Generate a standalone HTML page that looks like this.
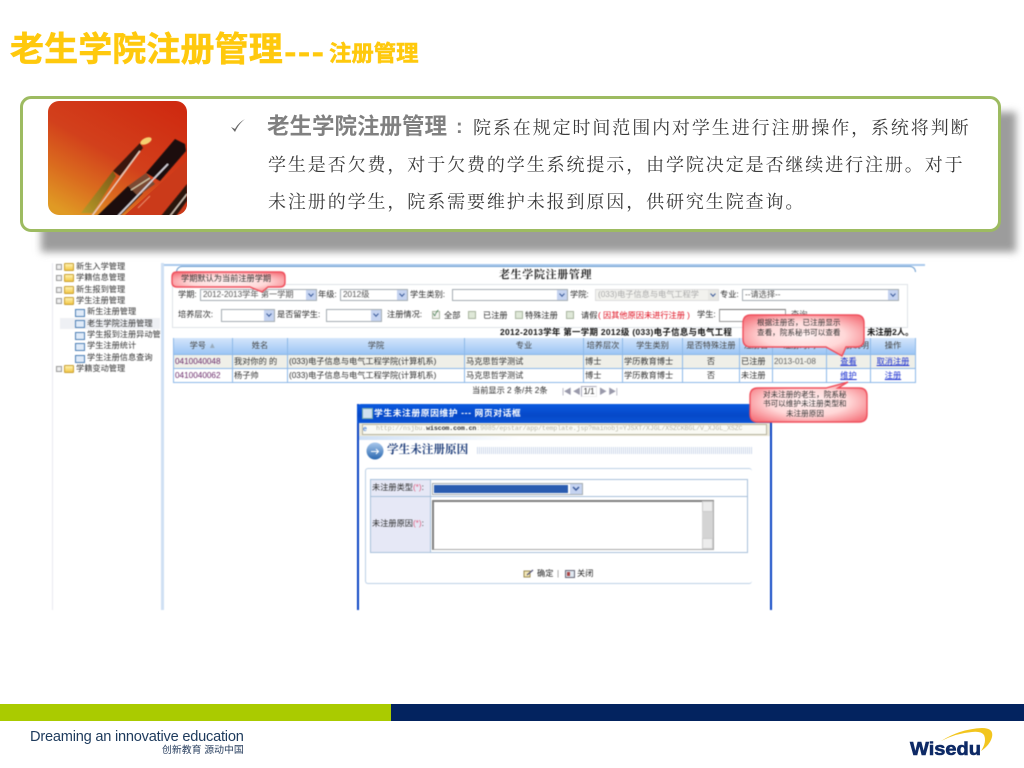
<!DOCTYPE html>
<html lang="zh"><head><meta charset="utf-8"><title>老生学院注册管理</title>
<style>
html,body{margin:0;padding:0;background:#fff}
#p{position:relative;width:1024px;height:768px;overflow:hidden;background:#fff;font-family:"Liberation Sans","Noto Sans CJK SC",sans-serif}
#p div,#p span.t{position:absolute}
.t{position:absolute;white-space:nowrap;line-height:1}
.ttl{font-weight:700;color:#ffc90d;-webkit-text-stroke:.5px #ffc90d}
.bd{font-size:18px;letter-spacing:1.9px;color:#3a3a3a;font-family:'Noto Serif CJK SC',serif}
#shot{position:absolute;left:0;top:0;width:1024px;height:768px;filter:blur(.45px);font-size:8.2px;color:#2a2a2a}
.sel{position:absolute;box-sizing:border-box;background:#fff;border:1px solid #a5acb2;color:#555;font-size:8.2px;line-height:10px;padding-left:2px;white-space:nowrap;overflow:hidden}
.ar{position:absolute;right:0;top:0;bottom:0;width:10px;background:#c5d3f0}
.ar:after{content:"";position:absolute;left:2.5px;top:2px;width:3px;height:3px;border:solid #3a5a9a;border-width:0 1.5px 1.5px 0;transform:rotate(45deg)}
.cb{position:absolute;width:8px;height:8px;box-sizing:border-box;background:#dfe8d8;border:1px solid #a9b5a0}
.th,.td{position:absolute;box-sizing:border-box;border:1px solid #8db8e8;border-width:0 1px 1px 0;font-size:8.2px;white-space:nowrap;overflow:hidden}
.th{top:338px;height:17px;line-height:16px;text-align:center;background:linear-gradient(#d4e6fb,#9cc6f5);color:#444}
.td{height:14px;line-height:13px;padding-left:1px;color:#333}
.r1{top:355px;background:#efefe8}.r2{top:369px;background:#fff}
.lk{color:#1a2fd0;text-decoration:underline;text-align:center;padding:0}
.c{text-align:center;padding:0}
.tr{font-size:8.2px;color:#333}
.fold{position:absolute;left:64px;width:10px;height:8px;background:linear-gradient(#fff2b0,#f3c94a);border:1px solid #c9a030;box-sizing:border-box;border-radius:1px}
.pl{position:absolute;left:56px;width:6px;height:6px;border:1px solid #999;box-sizing:border-box;background:#eee}
.pg{position:absolute;left:75px;width:10px;height:8px;background:#dfeaf8;border:1px solid #4d7fb5;box-sizing:border-box}
</style></head><body><div id="p">

<span class="t ttl" style="left:10px;top:33px;font-size:34px;letter-spacing:.1px">老生学院注册管理</span>
<span class="t ttl" style="left:284px;top:33px;font-size:34px;letter-spacing:1.2px;font-family:'Noto Sans CJK SC',sans-serif">---</span>
<span class="t ttl" style="left:329px;top:43px;font-size:22.4px">注册管理</span>

<div style="left:41px;top:112px;width:975px;height:140px;background:#9c9c9c;filter:blur(4px)"></div>
<div style="left:20px;top:96px;width:981px;height:136px;box-sizing:border-box;background:#fff;border:3px solid #9dbb61;border-radius:11px"></div>

<svg style="position:absolute;left:48px;top:101px" width="139" height="114" viewBox="48 101 139 114">
<defs>
<linearGradient id="bg" x1="0.85" y1="0" x2="0.15" y2="1"><stop offset="0" stop-color="#cf2a10"/><stop offset=".5" stop-color="#d2401c"/><stop offset=".75" stop-color="#da6a1e"/><stop offset="1" stop-color="#e09a24"/></linearGradient>
<linearGradient id="gd" x1="0" y1="1" x2="1" y2="0"><stop offset="0" stop-color="#b89a28"/><stop offset="1" stop-color="#7a5a18"/></linearGradient>
<clipPath id="cp"><rect x="48" y="101" width="139" height="114" rx="11"/></clipPath>
<filter id="sf"><feGaussianBlur stdDeviation=".55"/></filter>
</defs>
<g clip-path="url(#cp)">
<rect x="48" y="101" width="139" height="114" fill="url(#bg)"/>
<path d="M125 215L187 160V215Z" fill="#cb3a1a"/>
<g filter="url(#sf)">
<path d="M81 213L93 213L116 176L113 171Z" fill="url(#gd)"/>
<path d="M113 171L140 143L143 148L120 176Z" fill="#3a1510"/>
<ellipse cx="146" cy="141" rx="6" ry="3" transform="rotate(-25 146 141)" fill="#f5d070"/>
<path d="M92 216L140 151" stroke="#e8c8b8" stroke-width="1.600" fill="none"/>
<path d="M97 216L128 186L143 193L120 216Z" fill="#1a0808"/>
<path d="M128 186L146 173L155 184L138 196Z" fill="#7a4a32"/>
<path d="M131 190L150 178" stroke="#d8c8a8" stroke-width="1.200"/>
<path d="M146 173L175 139L185 144L186 151L160 181Z" fill="#1e0a0c"/>
<path d="M118 216L168 164" stroke="#dcd8e0" stroke-width="1.600" fill="none"/>
<path d="M161 216L187 184V201L176 216Z" fill="#2a1210"/>
<path d="M170 216L187 194" stroke="#d8c8b8" stroke-width="1.300" fill="none"/>
<path d="M138 208L150 196" stroke="#e89070" stroke-width="1" fill="none"/>
</g>
</g></svg>

<svg style="position:absolute;left:230px;top:118px" width="16" height="16" viewBox="0 0 16 16"><path d="M1 9L5 14Q8.500 6 15 1Q8 5 5 11Z" fill="#666"/></svg>
<span class="t" style="left:267px;top:116px;font-size:22.5px;font-weight:700;color:#808080">老生学院注册管理</span>
<span class="t" style="left:456px;top:117px;font-size:20px;font-weight:700;color:#808080">:</span>
<span class="t bd" style="left:473px;top:118px">院系在规定时间范围内对学生进行注册操作，系统将判断</span>
<span class="t bd" style="left:268px;top:155px">学生是否欠费，对于欠费的学生系统提示，由学院决定是否继续进行注册。对于</span>
<span class="t bd" style="left:268px;top:192px">未注册的学生，院系需要维护未报到原因，供研究生院查询。</span>

<div id="shot">
<!-- sidebar -->
<div style="left:52px;top:263px;width:108px;height:347px;background:#fff;border-left:1px solid #e8e8f0"></div>
<div style="left:161px;top:263px;width:3px;height:347px;background:#cfe0f3"></div>
<div style="left:60px;top:318px;width:100px;height:11px;background:#eef0f4"></div>
<div class="pl" style="top:264px"></div><div class="fold" style="top:263px"></div><span class="t tr" style="left:76px;top:263px">新生入学管理</span>
<div class="pl" style="top:275px"></div><div class="fold" style="top:274px"></div><span class="t tr" style="left:76px;top:274px">学籍信息管理</span>
<div class="pl" style="top:287px"></div><div class="fold" style="top:286px"></div><span class="t tr" style="left:76px;top:286px">新生报到管理</span>
<div class="pl" style="top:298px"></div><div class="fold" style="top:297px"></div><span class="t tr" style="left:76px;top:297px">学生注册管理</span>
<div class="pg" style="top:309px"></div><span class="t tr" style="left:87px;top:308px">新生注册管理</span>
<div class="pg" style="top:320px"></div><span class="t tr" style="left:87px;top:320px">老生学院注册管理</span>
<div class="pg" style="top:332px"></div><span class="t tr" style="left:87px;top:331px">学生报到注册异动管</span>
<div class="pg" style="top:343px"></div><span class="t tr" style="left:87px;top:342px">学生注册统计</span>
<div class="pg" style="top:355px"></div><span class="t tr" style="left:87px;top:354px">学生注册信息查询</span>
<div class="pl" style="top:366px"></div><div class="fold" style="top:365px"></div><span class="t tr" style="left:76px;top:365px">学籍变动管理</span>

<!-- main panel frame -->
<div style="left:164px;top:264px;width:761px;height:2px;background:#a9c9ec"></div>
<div style="left:176px;top:266px;width:740px;height:6px;box-sizing:border-box;border:1.500px solid #6f9fd0;border-bottom:0;border-radius:6px 6px 0 0;background:#fff"></div>
<div style="left:172px;top:284px;width:736px;height:44px;box-sizing:border-box;border:1px solid #dfe3e8"></div>
<span class="t" style="left:499px;top:269px;font-size:11px;font-weight:700;color:#222;letter-spacing:.65px;font-family:'Noto Serif CJK SC',serif">老生学院注册管理</span>

<span class="t" style="left:178px;top:291px">学期:</span>
<div class="sel" style="left:200px;top:289px;width:117px;height:12px">2012-2013学年 第一学期<i class="ar"></i></div>
<span class="t" style="left:318px;top:291px">年级:</span>
<div class="sel" style="left:340px;top:289px;width:68px;height:12px">2012级<i class="ar"></i></div>
<span class="t" style="left:410px;top:291px">学生类别:</span>
<div class="sel" style="left:452px;top:289px;width:116px;height:12px"><i class="ar"></i></div>
<span class="t" style="left:570px;top:291px">学院:</span>
<div class="sel" style="left:595px;top:289px;width:124px;height:12px;background:#f2f2ee;color:#aaa;border-color:#ddd">(033)电子信息与电气工程学<i class="ar" style="background:#e8e8e4"></i></div>
<span class="t" style="left:720px;top:291px">专业:</span>
<div class="sel" style="left:742px;top:289px;width:157px;height:12px">--请选择--<i class="ar"></i></div>

<span class="t" style="left:178px;top:311px">培养层次:</span>
<div class="sel" style="left:221px;top:309px;width:54px;height:13px"><i class="ar"></i></div>
<span class="t" style="left:277px;top:311px">是否留学生:</span>
<div class="sel" style="left:326px;top:309px;width:56px;height:13px"><i class="ar"></i></div>
<span class="t" style="left:387px;top:311px">注册情况:</span>
<div class="cb" style="left:432px;top:311px;background:#f2f2ee"></div><span class="t" style="left:433px;top:310px;font-size:8px;color:#263">✓</span>
<span class="t" style="left:444px;top:312px">全部</span>
<div class="cb" style="left:468px;top:311px"></div><span class="t" style="left:483px;top:312px">已注册</span>
<div class="cb" style="left:515px;top:311px"></div><span class="t" style="left:525px;top:312px">特殊注册</span>
<div class="cb" style="left:566px;top:311px"></div><span class="t" style="left:581px;top:312px">请假</span>
<span class="t" style="left:598px;top:312px;color:#e01020">( 因其他原因未进行注册 )</span>
<span class="t" style="left:697px;top:311px">学生:</span>
<div style="left:719px;top:309px;width:67px;height:13px;box-sizing:border-box;background:#fff;border:1px solid #999;border-top-color:#777"></div>
<span class="t" style="left:791px;top:311px;color:#555">查询</span>

<span class="t" style="left:500px;top:328px;font-weight:700;color:#111;letter-spacing:.35px;font-size:8.4px">2012-2013学年 第一学期 2012级 (033)电子信息与电气工程</span>
<span class="t" style="left:867px;top:328px;font-weight:700;color:#111;font-size:8.4px">未注册2人。</span>

<!-- table -->
<div class="th" style="left:173px;width:60px;border-left:1px solid #8db8e8">学号 <span style="color:#9ab">▲</span></div>
<div class="th" style="left:233px;width:55px">姓名</div>
<div class="th" style="left:288px;width:177px">学院</div>
<div class="th" style="left:465px;width:119px">专业</div>
<div class="th" style="left:584px;width:39px">培养层次</div>
<div class="th" style="left:623px;width:60px">学生类别</div>
<div class="th" style="left:683px;width:57px">是否特殊注册</div>
<div class="th" style="left:740px;width:33px">注册否</div>
<div class="th" style="left:773px;width:54px">注册时间</div>
<div class="th" style="left:827px;width:44px">未注册说明</div>
<div class="th" style="left:871px;width:45px">操作</div>

<div class="td r1" style="left:173px;width:60px;border-left:1px solid #8db8e8;color:#6a2a6a">0410040048</div>
<div class="td r1" style="left:233px;width:55px">我对你的 的</div>
<div class="td r1" style="left:288px;width:177px">(033)电子信息与电气工程学院(计算机系)</div>
<div class="td r1" style="left:465px;width:119px">马克思哲学测试</div>
<div class="td r1" style="left:584px;width:39px">博士</div>
<div class="td r1" style="left:623px;width:60px">学历教育博士</div>
<div class="td r1 c" style="left:683px;width:57px">否</div>
<div class="td r1" style="left:740px;width:33px">已注册</div>
<div class="td r1" style="left:773px;width:54px;color:#666">2013-01-08</div>
<div class="td r1 lk" style="left:827px;width:44px">查看</div>
<div class="td r1 lk" style="left:871px;width:45px">取消注册</div>

<div class="td r2" style="left:173px;width:60px;border-left:1px solid #8db8e8;color:#6a2a6a">0410040062</div>
<div class="td r2" style="left:233px;width:55px">杨子帅</div>
<div class="td r2" style="left:288px;width:177px">(033)电子信息与电气工程学院(计算机系)</div>
<div class="td r2" style="left:465px;width:119px">马克思哲学测试</div>
<div class="td r2" style="left:584px;width:39px">博士</div>
<div class="td r2" style="left:623px;width:60px">学历教育博士</div>
<div class="td r2 c" style="left:683px;width:57px">否</div>
<div class="td r2" style="left:740px;width:33px">未注册</div>
<div class="td r2" style="left:773px;width:54px"></div>
<div class="td r2 lk" style="left:827px;width:44px">维护</div>
<div class="td r2 lk" style="left:871px;width:45px">注册</div>

<span class="t" style="left:472px;top:387px">当前显示 2 条/共 2条</span>
<span class="t" style="left:562px;top:388px;font-size:8px;color:#99a;letter-spacing:-.5px">|◀ ◀</span>
<div style="left:581px;top:386px;width:16px;height:11px;box-sizing:border-box;border:1px solid #aab;border-right-color:#eee;border-bottom-color:#eee;text-align:center;line-height:9px;font-size:8px">1/1</div>
<span class="t" style="left:599px;top:388px;font-size:8px;color:#99a;letter-spacing:-.5px">▶ ▶|</span>

<!-- dialog -->
<div style="left:357px;top:404px;width:415px;height:206px;box-sizing:border-box;background:#fff;border:solid #0a44c4;border-width:0 2px"></div>
<div style="left:357px;top:404px;width:415px;height:19px;background:linear-gradient(#0a5ae0,#0648c8 60%,#0a55d8);border-radius:4px 4px 0 0"></div>
<div style="left:362px;top:408px;width:9px;height:9px;background:#cfe0f0;border:1px solid #7aa"></div>
<span class="t" style="left:374px;top:409px;color:#fff;font-size:8.8px;font-weight:700;letter-spacing:.55px">学生未注册原因维护 --- 网页对话框</span>
<div style="left:359px;top:423px;width:411px;height:13px;background:#ece9d8"></div>
<div style="left:362px;top:424px;width:405px;height:11px;box-sizing:border-box;background:#fafaf4;border:1px solid #b8b4a0"></div>
<span class="t" style="left:363px;top:426px;font-size:7px;color:#2a6acc">e</span>
<span class="t" style="left:376px;top:426px;font-size:6.6px;color:#b8b8a8;font-family:'Liberation Mono',monospace;letter-spacing:-.1px">http://nsjbu.<b style="color:#333">wiscom.com.cn</b>:9085/epstar/app/template.jsp?mainobj=YJSXT/XJGL/XSZCKBGL/V_XJGL_XSZC</span>
<div style="left:359px;top:436px;width:160px;height:4px;background:linear-gradient(90deg,#cfe0f5,#fff)"></div>

<svg style="position:absolute;left:366px;top:442px" width="18" height="18" viewBox="0 0 18 18"><defs><linearGradient id="cg" x1="0" y1="0" x2="0" y2="1"><stop offset="0" stop-color="#a8c8ec"/><stop offset="1" stop-color="#2a68b0"/></linearGradient></defs><circle cx="9" cy="9" r="8.500" fill="url(#cg)"/><path d="M5 9.500H12M10 7L12.500 9.500L10 12" stroke="#fff" fill="none"/></svg>
<span class="t" style="left:387px;top:444px;font-size:11.6px;font-weight:700;color:#1a3a78;font-family:'Noto Serif CJK SC',serif">学生未注册原因</span>
<div style="left:477px;top:447px;width:275px;height:7px;background:repeating-linear-gradient(90deg,#cdd8ea 0,#cdd8ea 1px,#fff 1px,#fff 2px)"></div>

<div style="left:365px;top:468px;width:387px;height:116px;box-sizing:border-box;border:1px solid #bcd0e6;border-right:0;border-radius:3px"></div>
<div style="left:370px;top:479px;width:378px;height:74px;box-sizing:border-box;border:1px solid #a8c0da;background:#fff"></div>
<div style="left:371px;top:480px;width:59px;height:72px;background:#e6e8f6"></div>
<div style="left:430px;top:480px;width:1px;height:72px;background:#a8c0da"></div>
<div style="left:371px;top:496px;width:376px;height:1px;background:#a8c0da"></div>
<span class="t" style="left:372px;top:484px">未注册类型<span style="color:#e06080">(*)</span>:</span>
<span class="t" style="left:372px;top:520px">未注册原因<span style="color:#e06080">(*)</span>:</span>
<div style="left:432px;top:483px;width:151px;height:12px;box-sizing:border-box;border:1px solid #a5acb2;background:#fff"></div>
<div style="left:434px;top:485px;width:134px;height:8px;background:#2a5cb0"></div>
<div style="left:570px;top:484px;width:12px;height:10px;background:#c5d3f0"></div>
<svg style="position:absolute;left:572px;top:486px" width="8" height="6" viewBox="0 0 8 6"><path d="M1 1L4 4L7 1" stroke="#3a5a9a" stroke-width="1.500" fill="none"/></svg>
<div style="left:432px;top:500px;width:282px;height:50px;box-sizing:border-box;background:#fff;border:1px solid #a8a8a8;border-top:2px solid #808080;border-left:2px solid #808080"></div>
<div style="left:702px;top:501px;width:11px;height:48px;background:#d4d4d4"></div>
<div style="left:702px;top:501px;width:11px;height:11px;background:#ececec;border:1px solid #ccc;box-sizing:border-box"></div>
<div style="left:702px;top:538px;width:11px;height:11px;background:#ececec;border:1px solid #ccc;box-sizing:border-box"></div>

<svg style="position:absolute;left:523px;top:569px" width="11" height="10" viewBox="0 0 11 10"><path d="M1 2H7V8H1Z" fill="#f4e8b8" stroke="#998a50"/><path d="M4 6L10 1" stroke="#557" stroke-width="1.200"/></svg>
<span class="t" style="left:537px;top:570px;color:#222">确定</span>
<span class="t" style="left:557px;top:570px;color:#888">|</span>
<svg style="position:absolute;left:565px;top:569px" width="10" height="10" viewBox="0 0 10 10"><rect x=".5" y="1.500" width="9" height="7" fill="#dfe8f0" stroke="#667"/><rect x="2" y="3" width="3" height="4" fill="#a44"/></svg>
<span class="t" style="left:577px;top:570px;color:#222">关闭</span>

<!-- bubbles -->
<svg style="position:absolute;left:0;top:0" width="1024" height="768" viewBox="0 0 1024 768">
<defs>
<radialGradient id="b" cx=".5" cy=".5" r=".62"><stop offset="0" stop-color="#fff2f2"/><stop offset=".55" stop-color="#ffd8d8"/><stop offset="1" stop-color="#f67a82"/></radialGradient>
</defs>
<path d="M177 272H280Q285 272 285 277V282Q285 287 280 287H268L262 292L250 287H177Q172 287 172 282V277Q172 272 177 272Z" fill="url(#b)" stroke="#ef4f5c" stroke-width="1.400"/>
<path d="M751 315H856Q864 315 864 323V339Q864 347 856 347H846L842 356L826 347H751Q743 347 743 339V323Q743 315 751 315Z" fill="url(#b)" stroke="#ef4f5c" stroke-width="1.400"/>
<path d="M758 388H826L848 382L838 388H859Q867 388 867 396V414Q867 422 859 422H758Q750 422 750 414V396Q750 388 758 388Z" fill="url(#b)" stroke="#ef4f5c" stroke-width="1.400"/>
</svg>
<span class="t" style="left:181px;top:275px;color:#333;font-size:8.2px">学期默认为当前注册学期</span>
<span class="t" style="left:757px;top:319px;color:#333;font-size:7.6px">根据注册否，已注册显示</span>
<span class="t" style="left:757px;top:329px;color:#333;font-size:7.6px">查看，院系秘书可以查看</span>
<span class="t" style="left:763px;top:391px;color:#333;font-size:7.600px">对未注册的老生，院系秘</span>
<span class="t" style="left:763px;top:400px;color:#333;font-size:7.600px">书可以维护未注册类型和</span>
<span class="t" style="left:786px;top:410px;color:#333;font-size:7.600px">未注册原因</span>
</div>

<!-- footer -->
<div style="left:0;top:704px;width:391px;height:17px;background:#aacb00"></div>
<div style="left:391px;top:704px;width:633px;height:17px;background:#03235f"></div>
<span class="t" style="left:30px;top:730px;font-size:14.6px;color:#1d3a5c;letter-spacing:-.22px">Dreaming an innovative education</span>
<span class="t" style="left:162px;top:746px;font-size:9.9px;color:#2a4060">创新教育 源动中国</span>
<svg style="position:absolute;left:900px;top:722px" width="110" height="40" viewBox="900 722 110 40">
<path d="M941 741Q960 729 982 728Q994 728 992 737Q990 745 981 751Q987 742 984 735Q981 731 972 732Q957 733 941 741Z" fill="#f2c51e"/>
<text x="910" y="755" font-family="Liberation Sans" font-weight="700" font-size="18" fill="#0e2a66" stroke="#0e2a66" stroke-width=".6" textLength="71" lengthAdjust="spacingAndGlyphs">Wisedu</text>
</svg>
</div></body></html>
